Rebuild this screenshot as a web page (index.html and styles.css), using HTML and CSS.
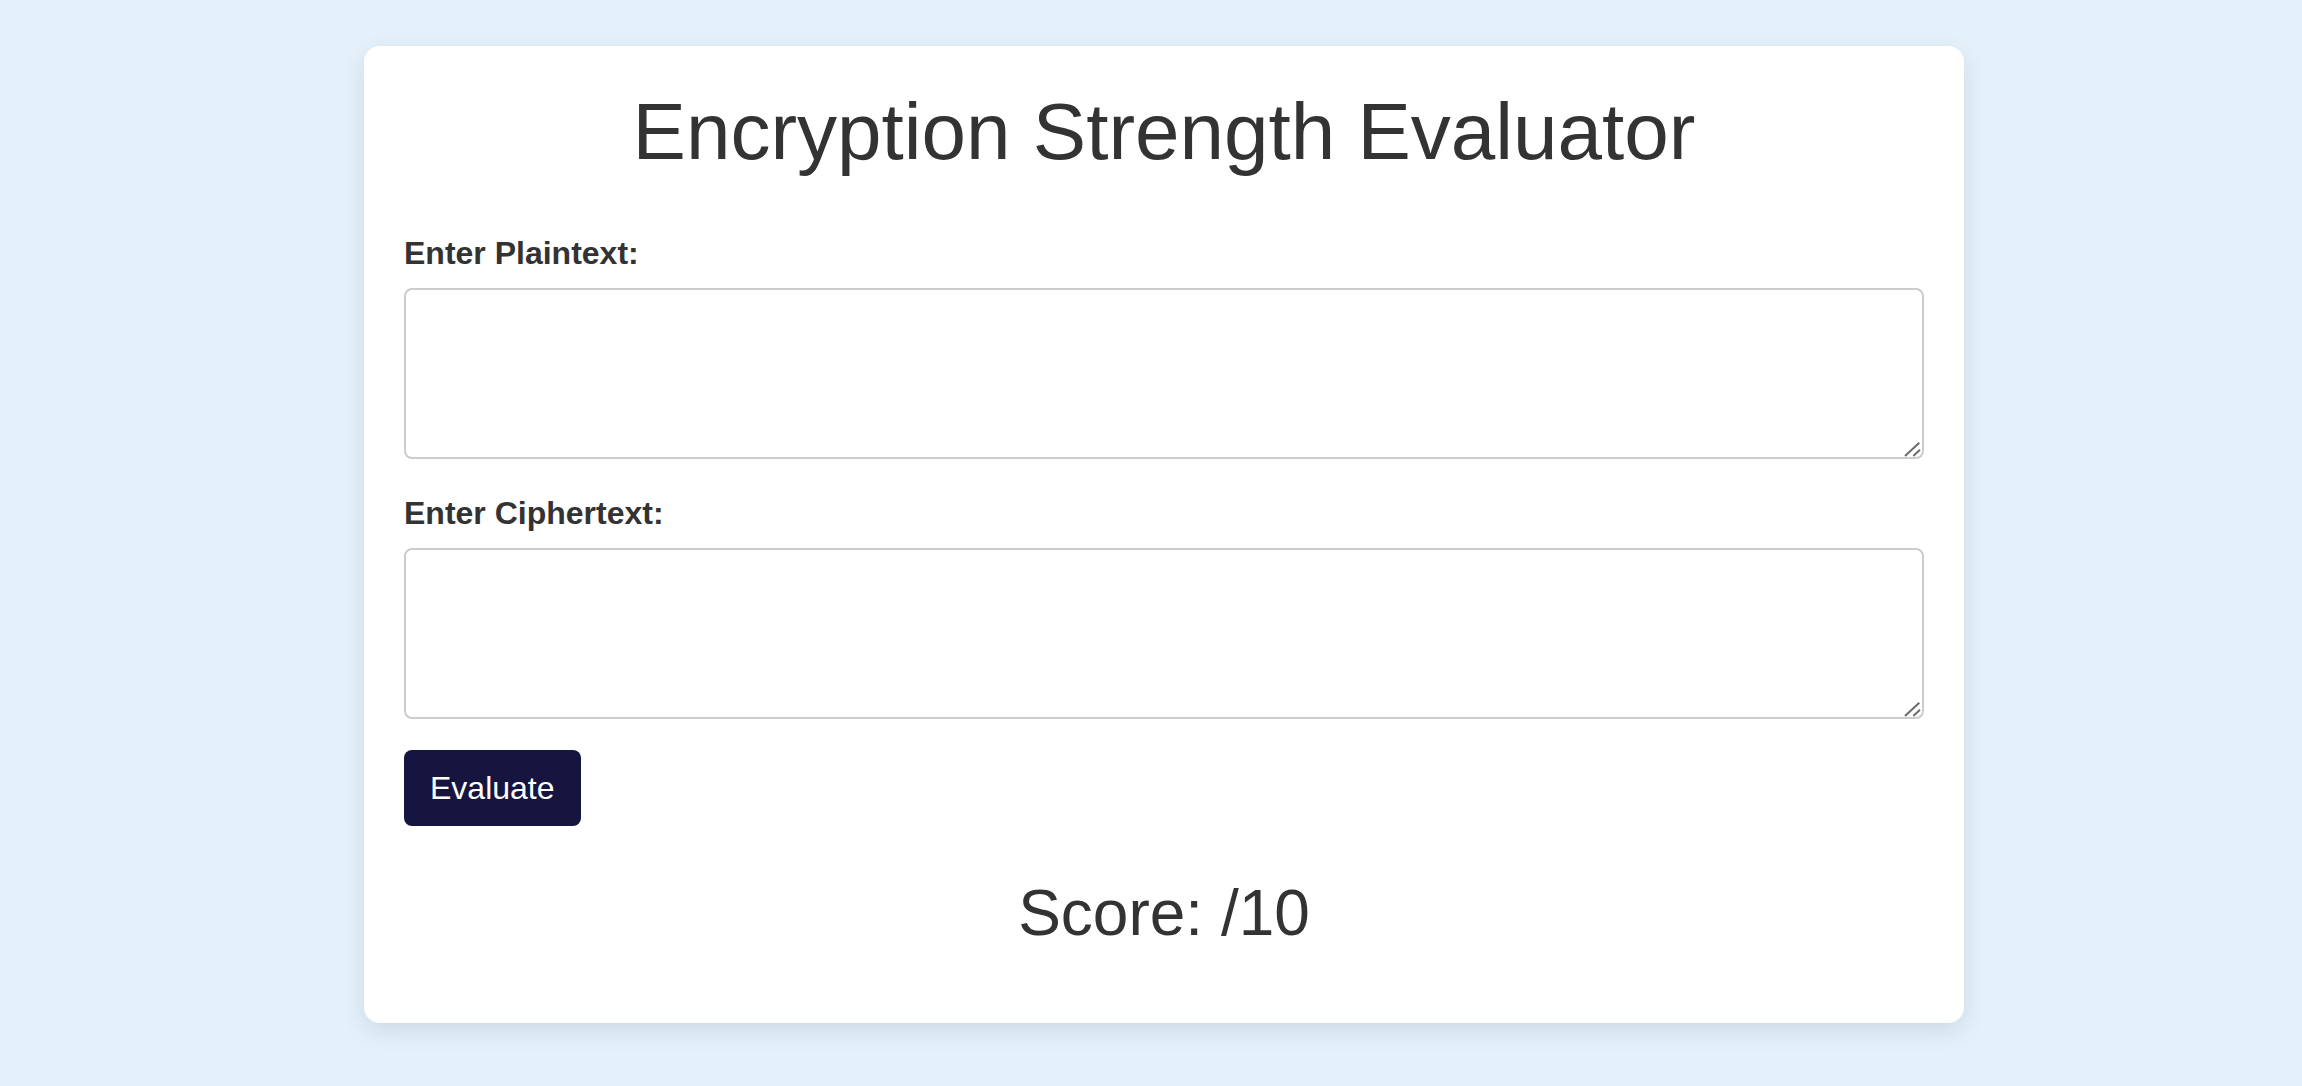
FILE: index.html
```html
<!DOCTYPE html>
<html lang="en">
<head>
<meta charset="utf-8">
<title>Encryption Strength Evaluator</title>
<link rel="stylesheet" href="styles.css">
</head>
<body>
<main class="card">
  <h1 class="title">Encryption Strength Evaluator</h1>
  <label class="field-label" for="plaintext">Enter Plaintext:</label>
  <div class="field-wrap field-first">
    <textarea id="plaintext" class="field"></textarea>
    <svg class="grip" width="20" height="20" viewBox="0 0 20 20" aria-hidden="true">
      <line x1="1" y1="17" x2="15.3" y2="3.7" />
      <line x1="9.3" y1="17" x2="16" y2="10.7" />
    </svg>
  </div>
  <label class="field-label" for="ciphertext">Enter Ciphertext:</label>
  <div class="field-wrap">
    <textarea id="ciphertext" class="field"></textarea>
    <svg class="grip" width="20" height="20" viewBox="0 0 20 20" aria-hidden="true">
      <line x1="1" y1="17" x2="15.3" y2="3.7" />
      <line x1="9.3" y1="17" x2="16" y2="10.7" />
    </svg>
  </div>
  <button class="btn" type="button">Evaluate</button>
  <div class="score">Score: /10</div>
</main>
</body>
</html>
```

FILE: styles.css
```css
html, body {
  margin: 0;
  padding: 0;
}
body {
  background: #e4f1fb;
  font-family: "Liberation Sans", Arial, sans-serif;
  color: #333;
  padding: 46px 0 0 26px;
  min-height: 1086px;
  box-sizing: border-box;
}
.card {
  width: 1600px;
  box-sizing: border-box;
  margin: 0 auto;
  background: #fff;
  border-radius: 16px;
  box-shadow: 0 8px 24px rgba(0, 0, 0, 0.1);
  padding: 40px 40px 73px;
  display: flex;
  flex-direction: column;
  align-items: stretch;
}
.title {
  margin: 0 0 57px;
  font-size: 80px;
  line-height: 92px;
  font-weight: normal;
  text-align: center;
  color: #333;
}
.field-label {
  display: block;
  font-size: 32px;
  line-height: 37px;
  font-weight: bold;
  color: #333;
  margin: 0 0 16px;
}
.field-wrap {
  position: relative;
  height: 171px;
}
.field {
  display: block;
  width: 100%;
  height: 171px;
  box-sizing: border-box;
  border: 2px solid #ccc;
  border-radius: 8px;
  padding: 10px;
  font-family: "Liberation Sans", Arial, sans-serif;
  font-size: 28px;
  margin: 0;
  background: #fff;
  resize: vertical;
}
.field::-webkit-resizer {
  display: none;
  background: transparent;
}
.grip {
  position: absolute;
  right: 0;
  bottom: 0;
  pointer-events: none;
}
.grip line {
  stroke: #6b6b6b;
  stroke-width: 2;
  stroke-linecap: butt;
}
.field-first {
  margin-bottom: 36px;
}
.btn {
  align-self: flex-start;
  margin-top: 31px;
  background: #15153f;
  color: #fff;
  border: none;
  border-radius: 8px;
  font-family: "Liberation Sans", Arial, sans-serif;
  font-size: 32px;
  line-height: 36px;
  padding: 20px 26px;
  cursor: pointer;
}
.score {
  margin-top: 50px;
  font-size: 64px;
  line-height: 74px;
  text-align: center;
  color: #333;
}
```
